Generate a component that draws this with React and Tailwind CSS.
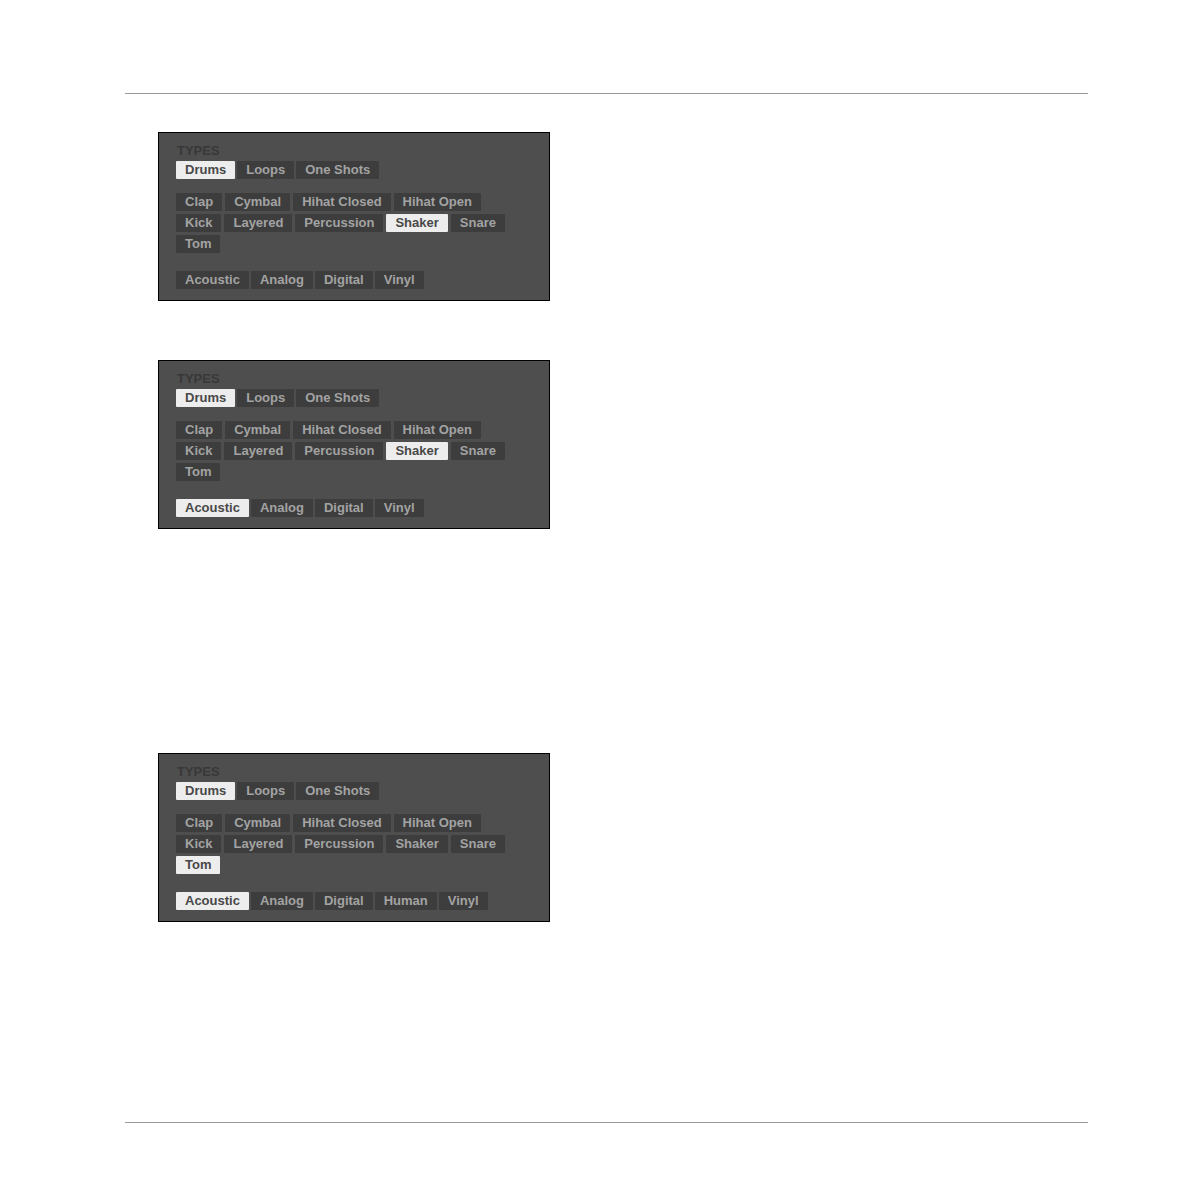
import React, { useState } from 'react';
import clsx from 'clsx';

const categories = ['Drums', 'Loops', 'One Shots'];
const subTypes = ['Clap', 'Cymbal', 'Hihat Closed', 'Hihat Open', 'Kick', 'Layered', 'Percussion', 'Shaker', 'Snare', 'Tom'];

const Tag = ({ label, active, onClick }) => (
    <button
        type="button"
        aria-pressed={active}
        onClick={onClick}
        className={clsx(
            'rounded-[1px] px-[9px] text-[13px] leading-[18px] font-bold whitespace-nowrap',
            active ? 'bg-[#ededed] text-[#484848]' : 'bg-[#3d3d3d] text-[#a3a3a3]'
        )}
    >
        {label}
    </button>
);

const TagGroup = ({ label, tags, initial, className }) => {
    const [selected, setSelected] = useState(initial);

    return (
        <div role="group" aria-label={label} className={clsx('flex flex-wrap', className)}>
            {tags.map((tag) => (
                <Tag
                    key={tag}
                    label={tag}
                    active={selected === tag}
                    onClick={() => setSelected(selected === tag ? '' : tag)}
                />
            ))}
        </div>
    );
};

const TypesPanel = ({ subType, mode, modes, className }) => (
    <section className={clsx('w-full max-w-[392px] border border-black bg-[#4e4e4e] pt-[9px] pr-6 pb-[11px] pl-[17px]', className)}>
        <h2 className="mb-px pl-px text-[13px] leading-[18px] font-bold text-[#383838]">TYPES</h2>
        <TagGroup label="Category" tags={categories} initial="Drums" className="gap-[2px]" />
        <TagGroup label="Type" tags={subTypes} initial={subType} className="mt-[14px] gap-[3px]" />
        <TagGroup label="Mode" tags={modes} initial={mode} className="mt-[18px] gap-[2px]" />
    </section>
);

const App = () => {
    return (
        <div className="min-h-screen bg-white pt-[93px] pr-[103px] pb-[68px] pl-[125px] font-['Liberation_Sans',Arial,sans-serif]">
            <main className="border-y border-[#9b9b9b] pt-[38px] pb-[200px] pl-[33px]">
                <TypesPanel subType="Shaker" mode="" modes={['Acoustic', 'Analog', 'Digital', 'Vinyl']} />
                <TypesPanel subType="Shaker" mode="Acoustic" modes={['Acoustic', 'Analog', 'Digital', 'Vinyl']} className="mt-[59px]" />
                <TypesPanel subType="Tom" mode="Acoustic" modes={['Acoustic', 'Analog', 'Digital', 'Human', 'Vinyl']} className="mt-[224px]" />
            </main>
        </div>
    );
};

export default App;
